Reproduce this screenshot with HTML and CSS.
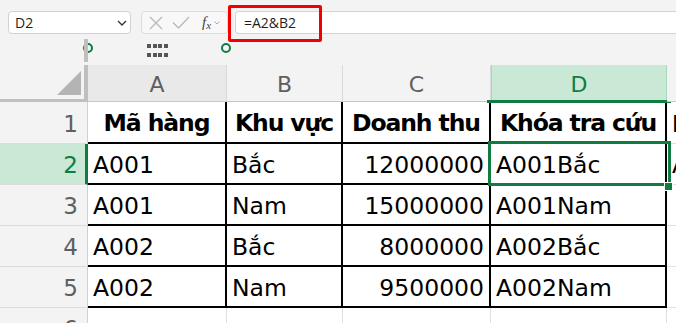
FILE: index.html
```html
<!DOCTYPE html>
<html lang="vi">
<head>
  <meta charset="UTF-8" />
  <title>Excel - Khóa tra cứu</title>
  <link rel="stylesheet" href="styles.css">
</head>
<body>
  <div class="toolbar">
    <div class="namebox">
      <span>D2</span>
      <svg class="chev" width="10" height="6" viewBox="0 0 10 6"><polyline points="1,1 5,5 9,1" fill="none" stroke="#333" stroke-width="1.3"/></svg>
    </div>
    <div class="fxbox">
      <svg width="14" height="14" viewBox="0 0 14 14"><path d="M1 1 L13 13 M13 1 L1 13" stroke="#b9b9b9" stroke-width="1.3" fill="none"/></svg>
      <svg width="18" height="13" viewBox="0 0 18 13"><polyline points="1,6.5 6.5,12 17,1" fill="none" stroke="#b9b9b9" stroke-width="1.3"/></svg>
      <span class="fx">f<sub>x</sub></span>
      <svg width="6" height="4" viewBox="0 0 6 4"><polyline points="0.5,0.5 3,3 5.5,0.5" fill="none" stroke="#aaa" stroke-width="1"/></svg>
    </div>
    <div class="formula">=A2&amp;B2</div>
  </div>

  <div class="strip">
    <div class="corner-edge"></div>
    <span class="ring ring-left"></span>
    <span class="grip"><i></i><i></i><i></i><i></i><i></i><i></i><i></i><i></i></span>
    <span class="ring ring-right"></span>
  </div>

  <div class="sheet">
    <div class="corner"><span class="tri"></span></div>
    <div class="colhead col-a">A</div>
    <div class="colhead">B</div>
    <div class="colhead">C</div>
    <div class="colhead sel">D</div>
    <div class="colhead"></div>

    <div class="rowhead">1</div>
    <div class="cell bold center">Mã hàng</div>
    <div class="cell bold center">Khu vực</div>
    <div class="cell bold center">Doanh thu</div>
    <div class="cell bold center">Khóa tra cứu</div>
    <div class="cell out bold">Kết quả</div>

    <div class="rowhead sel">2</div>
    <div class="cell">A001</div>
    <div class="cell">Bắc</div>
    <div class="cell num">12000000</div>
    <div class="cell">A001Bắc</div>
    <div class="cell out">A001</div>

    <div class="rowhead">3</div>
    <div class="cell">A001</div>
    <div class="cell">Nam</div>
    <div class="cell num">15000000</div>
    <div class="cell">A001Nam</div>
    <div class="cell out"></div>

    <div class="rowhead">4</div>
    <div class="cell">A002</div>
    <div class="cell">Bắc</div>
    <div class="cell num">8000000</div>
    <div class="cell">A002Bắc</div>
    <div class="cell out"></div>

    <div class="rowhead">5</div>
    <div class="cell">A002</div>
    <div class="cell">Nam</div>
    <div class="cell num">9500000</div>
    <div class="cell">A002Nam</div>
    <div class="cell out"></div>

    <div class="rowhead">6</div>
    <div class="cell empty"></div>
    <div class="cell empty"></div>
    <div class="cell empty"></div>
    <div class="cell empty"></div>
    <div class="cell out"></div>

    <div class="selection"></div>
    <div class="fill-handle"></div>
  </div>

  <div class="callout"></div>
</body>
</html>
```

FILE: styles.css
```css
* {
  margin: 0;
  padding: 0;
  box-sizing: border-box;
}

body {
  width: 676px;
  height: 323px;
  overflow: hidden;
  position: relative;
  background-color: #f3f3f3;
  font-family: 'DejaVu Sans', sans-serif;
}

/* formula bar */
.toolbar {
  display: flex;
  height: 36px;
  padding: 11px 0 0 8px;
  font-family: 'Open Sans', 'Noto Sans', sans-serif;
  font-size: 14px;
  color: #1f1f1f;
}

.namebox {
  width: 123px;
  height: 23px;
  background-color: white;
  border: 1px solid #d1d1d1;
  border-radius: 4px;
  display: flex;
  align-items: center;
  justify-content: space-between;
  padding: 0 3px 0 6px;
  margin-right: 10px;
}

.fxbox {
  width: 87px;
  height: 23px;
  border: 1px solid #dcdcdc;
  border-radius: 4px;
  background-color: #f8f8f8;
  display: flex;
  align-items: center;
  padding-left: 7px;
  gap: 9px;
}

.fx {
  font-family: 'Liberation Serif', serif;
  font-style: italic;
  font-size: 15px;
  color: #444;
  margin-left: 3px;
  margin-right: -6px;
  line-height: 1;
}

.fx sub {
  font-size: 11px;
  vertical-align: -2px;
}

.formula {
  flex: 1;
  height: 23px;
  margin-left: 7px;
  background-color: white;
  border: 1px solid #d3d3d3;
  border-right: none;
  border-radius: 4px 0 0 4px;
  padding-left: 8px;
  line-height: 21px;
}

.callout {
  position: absolute;
  left: 228px;
  top: 5px;
  width: 94px;
  height: 37px;
  border: 3px solid #f00000;
  border-radius: 2px;
}

/* strip between bar and grid, holds the shape handles */
.strip {
  position: relative;
  height: 26px;
}

.corner-edge {
  margin-left: 84px;
  margin-top: 3px;
  width: 4px;
  height: 23px;
  background-color: #bfbfbf;
}

.ring {
  position: absolute;
  width: 10px;
  height: 10px;
  border: 2px solid #107c41;
  border-radius: 50%;
  top: 4px;
}

.ring-left {
  left: 83px;
  z-index: -1;
}

.ring-right {
  left: 221px;
}

.grip {
  position: absolute;
  left: 147px;
  top: 5px;
  display: grid;
  grid-template-columns: repeat(4, 4px);
  gap: 5px 1.5px;
}

.grip i {
  width: 4px;
  height: 4px;
  background-color: #555;
}

/* worksheet */
.sheet {
  position: relative;
  display: grid;
  grid-template-columns: 88px 139px 116px 148px 176px 1fr;
  grid-template-rows: 37px 42px 41px 41px 41px 41px 41px;
  background-color: white;
}

.corner {
  position: relative;
  background-color: #f3f3f3;
  border-right: 4px solid #bfbfbf;
  border-bottom: 3px solid #bfbfbf;
}

.tri {
  position: absolute;
  right: 3px;
  bottom: 4px;
  width: 0;
  height: 0;
  border-left: 24px solid transparent;
  border-bottom: 24px solid #b4b4b4;
}

.colhead {
  position: relative;
  background-color: #f3f3f3;
  border-right: 1px solid #dadada;
  border-bottom: 1px solid #c8c8c8;
  display: flex;
  align-items: center;
  justify-content: center;
  padding-top: 2px;
  font-size: 22px;
  color: #5f5f5f;
}

.colhead.col-a {
  background-color: #e9e9e9;
}

.colhead.sel {
  background-color: #c9e9d6;
  color: #107c41;
  border-left: 1px solid #a8d8bc;
  border-right: 1px solid #a8d8bc;
  border-bottom: none;
}

.colhead.sel::after {
  content: '';
  position: absolute;
  left: -5px;
  right: -5px;
  bottom: -1px;
  height: 3px;
  background-color: #107c41;
}

.rowhead {
  background-color: #f3f3f3;
  border-right: 1px solid #d0d0d0;
  border-bottom: 1px solid #dcdcdc;
  display: flex;
  align-items: center;
  justify-content: flex-end;
  padding: 2px 9px 0 0;
  font-size: 23px;
  color: #5f5f5f;
}

.rowhead.sel {
  background-color: #c9e9d6;
  color: #107c41;
  border-right: 3px solid #107c41;
  padding-right: 7px;
}

.cell {
  display: flex;
  align-items: center;
  padding: 2px 5px 0 5px;
  font-size: 23.5px;
  color: black;
  white-space: nowrap;
  border-right: 2px solid black;
  border-bottom: 2px solid black;
}

.cell.bold {
  font-weight: bold;
  letter-spacing: -1.1px;
}

.cell.center {
  justify-content: center;
}

.cell.num {
  justify-content: flex-end;
}

.cell.out {
  border-right: none;
  border-bottom: 1px solid #e1e1e1;
}

.cell.empty {
  border-right: 1px solid #e1e1e1;
  border-bottom: 1px solid #e1e1e1;
}

.selection {
  position: absolute;
  left: 488px;
  top: 76px;
  width: 183px;
  height: 45px;
  border: 3px solid #107c41;
}

.fill-handle {
  position: absolute;
  left: 664px;
  top: 117px;
  width: 9px;
  height: 9px;
  background-color: #107c41;
  border: 1px solid white;
}
```
